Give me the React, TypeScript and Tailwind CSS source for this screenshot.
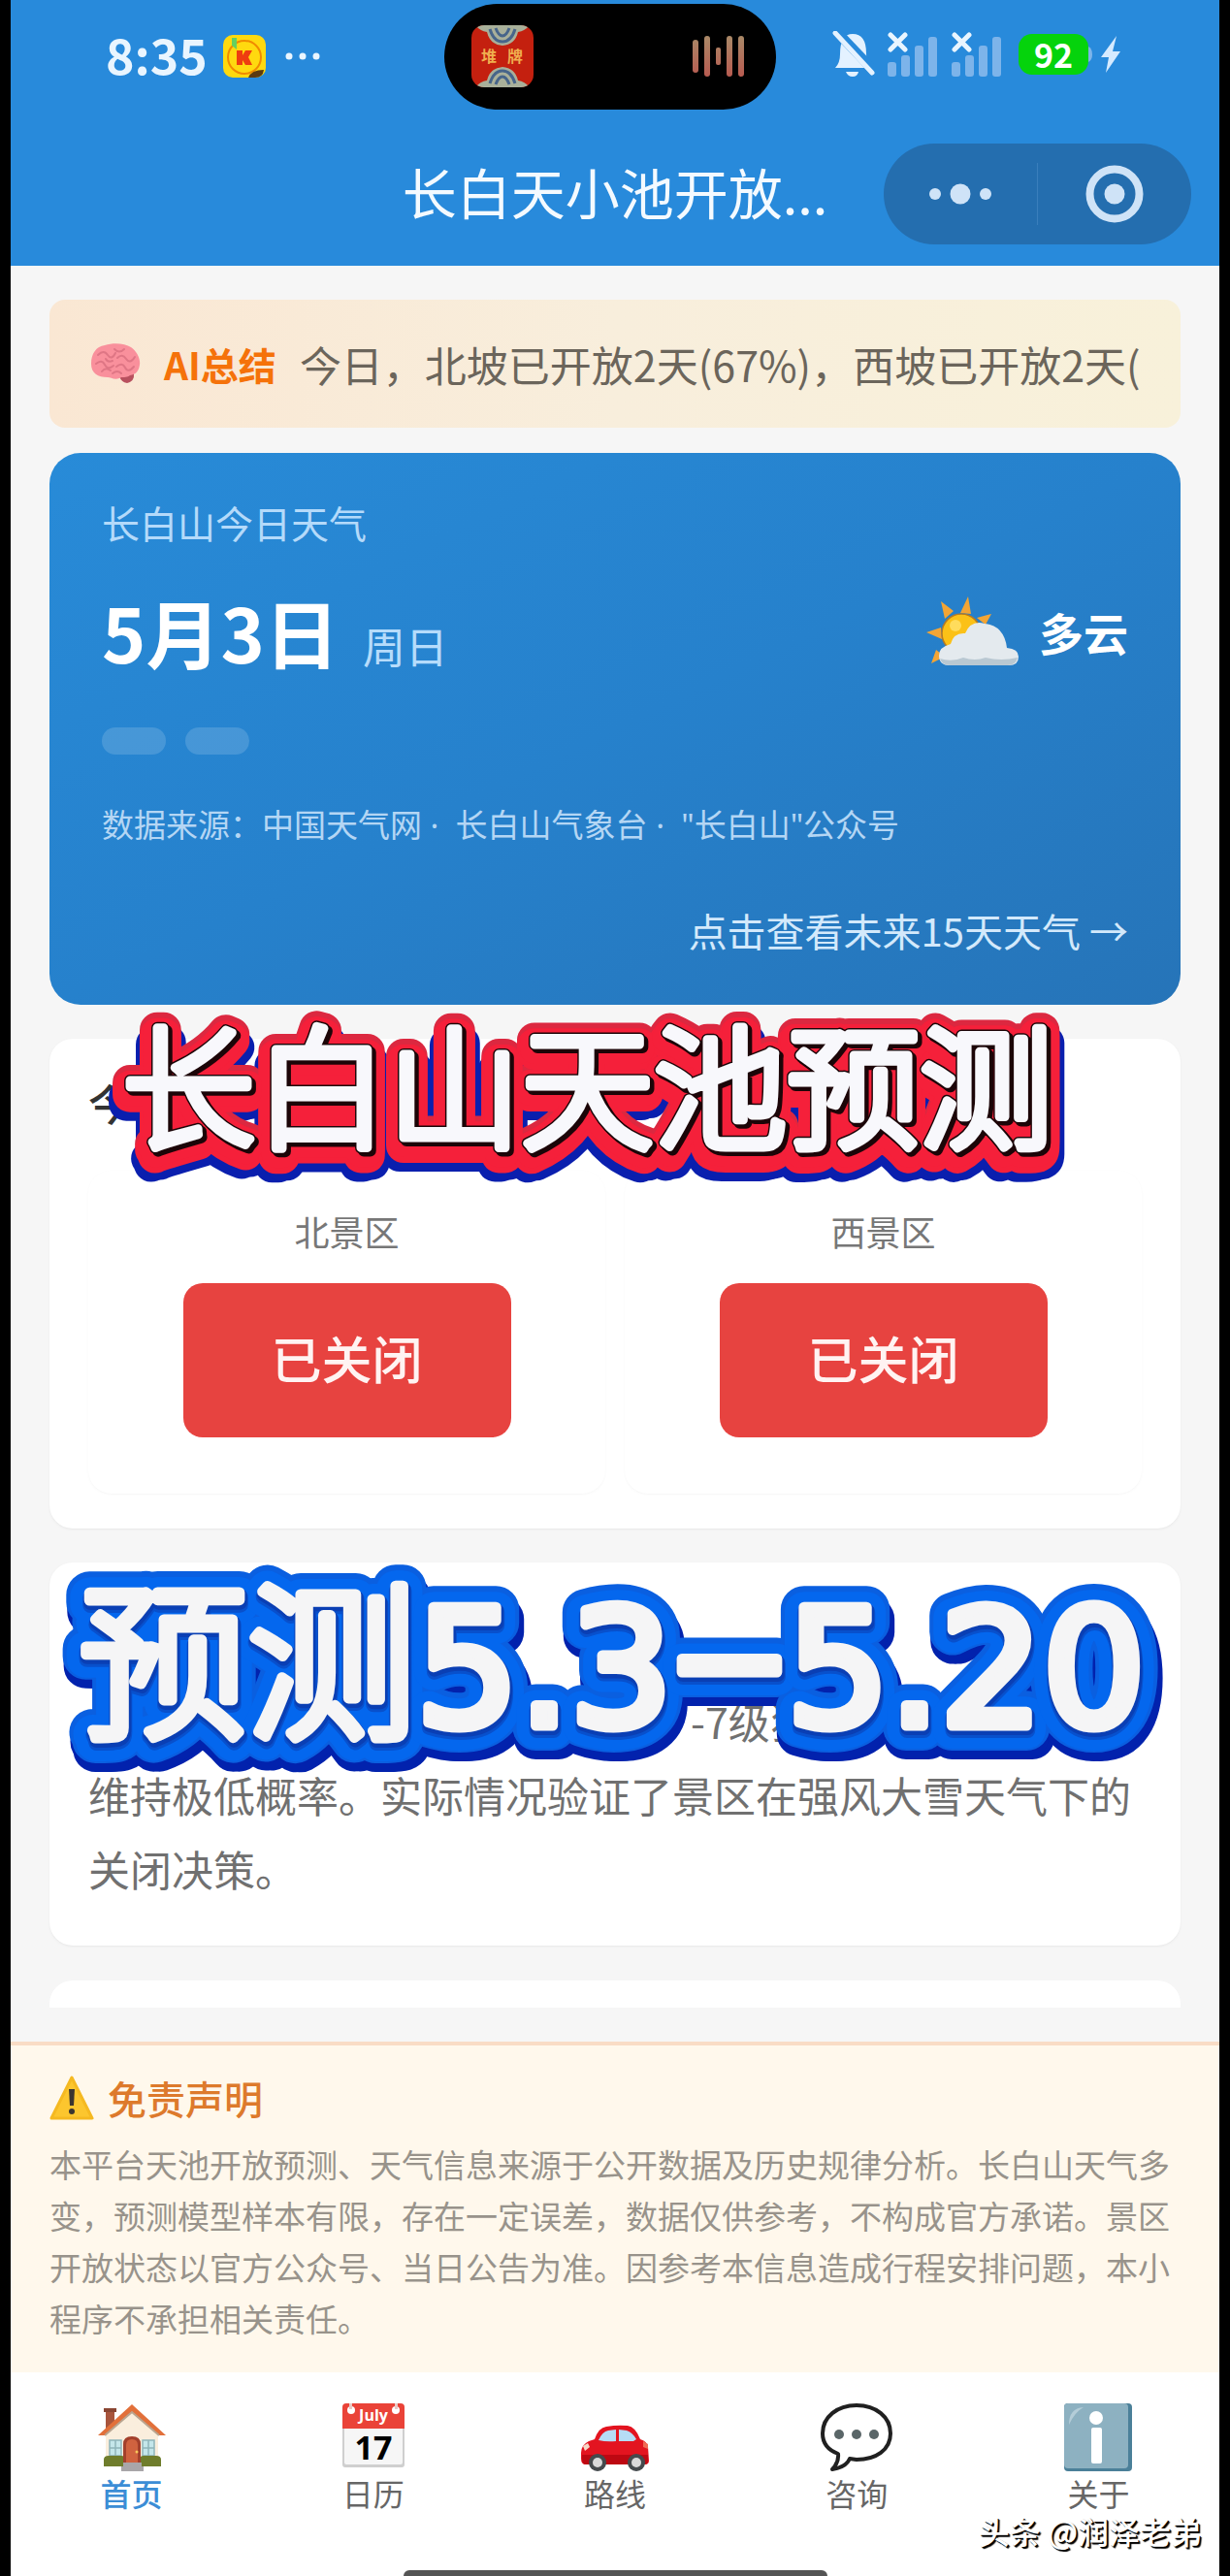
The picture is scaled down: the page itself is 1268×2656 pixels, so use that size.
import type { ReactNode } from "react";

const notice = "今日，北坡已开放2天(67%)，西坡已开放2天(";

const areas = [
  { name: "北景区", status: "已关闭" },
  { name: "西景区", status: "已关闭" },
];

const tabs = [
  { label: "首页", icon: <HouseIcon />, active: true },
  { label: "日历", icon: <CalendarIcon />, active: false },
  { label: "路线", icon: <CarIcon />, active: false },
  { label: "咨询", icon: <BubbleIcon />, active: false },
  { label: "关于", icon: <InfoIcon />, active: false },
];

function HouseIcon() {
  return (
    <svg viewBox="0 0 70 70" className="size-[70px]" aria-hidden="true">
      <path d="M8 7h9v20H8z" fill="#a8553c" />
      <path d="M6 5h13v4H6z" fill="#8a4633" />
      <path d="M8 32 35 6l27 26v32H8z" fill="#faeedd" />
      <path d="M35 1 0 33h7L35 9l28 24h7z" fill="#e2703a" />
      <path d="M7 33 35 9l28 24" fill="none" stroke="#b9a48f" strokeWidth="2" />
      <g fill="#c4e6ea" stroke="#8fb5ba" strokeWidth="1.5">
        <path d="M12 38h12v16H12zM46 38h12v16H46z" />
        <path d="M18 38v16M12 46h12M52 38v16M46 46h12" />
      </g>
      <path d="M6 58q0-4 5-4h13q4 0 4 4v7H6zM43 58q0-4 4-4h13q5 0 5 4v7H43z" fill="#6f7d2c" />
      <path d="M26 62V42q0-8 9-8t9 8v20z" fill="#a3402c" />
      <path d="M29 61V43q0-6 6-6t6 6v18z" fill="#d0623f" />
      <circle cx="40" cy="50" r="1.5" fill="#f7c65a" />
      <path d="M26 61h19v4h2v5H24v-5h2z" fill="#a9a6a9" />
    </svg>
  );
}

function CalendarIcon() {
  return (
    <svg viewBox="0 0 70 70" className="size-[70px]" aria-hidden="true">
      <rect x="3" y="2" width="64" height="64" rx="3" fill="#cfcfcf" />
      <rect x="5" y="4" width="60" height="59" rx="2" fill="#f6f6f6" />
      <path d="M3 4q0-4 4-4h56q4 0 4 4v22H3z" fill="#ea4338" />
      <circle cx="12" cy="7" r="4" fill="#fff" />
      <circle cx="58" cy="7" r="4" fill="#fff" />
      <path d="M10 0h3v6h-3zM57 0h3v6h-3z" fill="#e9c9c5" />
      <text
        x="35"
        y="18"
        textAnchor="middle"
        className="fill-white font-['Open_Sans',sans-serif] text-[16px] font-bold"
      >
        July
      </text>
      <text
        x="35"
        y="58"
        textAnchor="middle"
        className="fill-black font-['Open_Sans',sans-serif] text-[34px] font-bold"
      >
        17
      </text>
    </svg>
  );
}

function CarIcon() {
  return (
    <svg viewBox="0 0 70 70" className="size-[70px]" aria-hidden="true">
      <path
        d="M0 51q0-8 8-12 3-1 6-2 4-12 12-13 11-2 22-1 8 1 13 14 7 2 8 8l1 14q0 4-4 4H5q-5 0-5-6z"
        fill="#e31420"
      />
      <path d="M18 38q4-9 10-10l8-1v12q-10 1-18-1zM39 27l8 1q6 2 10 9l-3 2H39z" fill="#b6dcf5" />
      <path d="M1 53h68v6q0 4-4 4H5q-5 0-4-10z" fill="#bd0812" />
      <path d="M2 44l5-3 2 4-5 4z" fill="#f7d9c8" />
      <path d="M64 39l5 3v5l-5-2z" fill="#f06a55" />
      <circle cx="17" cy="61" r="9" fill="#454a4d" />
      <circle cx="17" cy="61" r="5" fill="#d9d9d9" />
      <circle cx="57" cy="61" r="9" fill="#454a4d" />
      <circle cx="57" cy="61" r="5" fill="#d9d9d9" />
    </svg>
  );
}

function BubbleIcon() {
  return (
    <svg viewBox="0 0 74 70" className="h-[70px] w-[74px]" aria-hidden="true">
      <path
        d="M37 2c20 0 35 12 35 29S57 58 37 58l-7-1q-4 9-18 11 7-7 6-16Q2 46 2 31C2 14 17 2 37 2z"
        fill="#fff"
        stroke="#202020"
        strokeWidth="4"
        strokeLinejoin="round"
      />
      <g fill="#5a6668">
        <circle cx="19" cy="32" r="5" />
        <circle cx="37" cy="32" r="5" />
        <circle cx="55" cy="32" r="5" />
      </g>
    </svg>
  );
}

function InfoIcon() {
  return (
    <svg viewBox="0 0 70 70" className="size-[70px]" aria-hidden="true">
      <rect width="70" height="70" rx="4" fill="#4b8099" />
      <rect width="66" height="67" rx="4" fill="#8db1c1" />
      <path d="M5 22Q5 5 20 4q-9 5-15 18z" fill="#b4cdd8" />
      <circle cx="33" cy="15" r="7" fill="#fff" />
      <rect x="28" y="25" width="11" height="37" rx="2" fill="#fff" />
    </svg>
  );
}

function BrainIcon() {
  return (
    <svg viewBox="0 0 52 42" className="h-[42px] w-[52px] shrink-0" aria-hidden="true">
      <path d="M30 34q8-4 15-3 1 8-7 10-6-1-8-7z" fill="#b8505e" />
      <path
        d="M1 21C1 11 6 3 15 2 24-1 36 0 42 4c6 4 10 12 9 18-1 7-4 10-10 11-4 3-8 1-11 3-5 2-9-1-12-1C8 35 1 31 1 21z"
        fill="#f9909c"
      />
      <path
        d="M8 12q6-6 10 0t8-2M6 21q6-5 9 1t9 1M12 29q4-5 9-1M25 6q5 5 10 0M28 15q5-5 9 1t9-2M27 24q6-5 9 1t9-1M23 31q5-4 9 0M16 16q2 4 7 2"
        fill="none"
        stroke="#df7685"
        strokeWidth="2"
        strokeLinecap="round"
      />
    </svg>
  );
}

function SunCloudIcon() {
  return (
    <svg viewBox="0 0 96 72" className="h-[72px] w-[96px]" aria-hidden="true">
      <g fill="#f3a535">
        <path d="M43 0l3 18-11-1zM15 5l13 10-9 8zM0 37l15-5 1 12zM5 69l5-14 9 7zM67 18l-6 11-9-7z" />
      </g>
      <circle cx="36" cy="38" r="20" fill="#fbc117" stroke="#b77a21" strokeWidth="1.5" />
      <circle cx="30" cy="30" r="6" fill="#ffdc5c" />
      <path
        d="M24 71q-11 0-11-10 0-9 12-12 3-12 15-11 6-14 20-10 20 2 23 25 12 1 12 9 0 9-10 9z"
        fill="#e4eaee"
      />
      <path d="M14 64q12 4 24-1 12 4 23 0 16 4 33 0-2 8-10 8H24q-8 0-10-7z" fill="#b9c8d2" />
    </svg>
  );
}

function WarningIcon() {
  return (
    <svg viewBox="0 0 46 46" className="size-[46px]" aria-hidden="true">
      <path d="M23 2 44 44H2z" fill="#fcc62e" stroke="#f5b921" strokeWidth="3" strokeLinejoin="round" />
      <path d="M20 14h6l-1 17h-4z" fill="#3b3530" />
      <circle cx="23" cy="37" r="3" fill="#3b3530" />
    </svg>
  );
}

function SignalIcon() {
  return (
    <svg viewBox="0 0 54 46" className="h-[46px] w-[54px]" aria-hidden="true">
      <g fill="#7db4ea">
        <rect x="1" y="31" width="9" height="15" rx="3" />
        <rect x="15" y="24" width="9" height="22" rx="3" />
        <rect x="29" y="14" width="9" height="32" rx="3" />
        <rect x="43" y="5" width="9" height="41" rx="3" />
      </g>
      <path d="M4 3l15 15M19 3L4 18" stroke="#e9f5ff" strokeWidth="5" strokeLinecap="round" />
    </svg>
  );
}

function StatusBar() {
  return (
    <div className="grid h-[116px] grid-cols-[1fr_342px_1fr] items-center pr-2.5">
      <div className="flex items-center pl-[98px]">
        <span className="pb-1.5 text-[50px] leading-none font-bold text-[#e9f5ff]">8:35</span>
        <svg viewBox="0 0 44 44" className="ml-4 size-[44px]" aria-hidden="true">
          <rect width="44" height="44" rx="10" fill="#ffd90f" />
          <circle cx="22" cy="23" r="17" fill="none" stroke="#f08a00" strokeWidth="2" />
          <path d="M14 16h6v5l3-5h7l-4 7 4 8h-7l-3-5v5h-6z" fill="#ee3d10" />
          <path d="M9 3h5v12l-5-4z" fill="#66cf5f" />
          <path d="M26 44q3-8 16-8-1 8-9 8z" fill="#5c3a10" />
        </svg>
        <svg viewBox="0 0 36 8" className="ml-5 h-2 w-9" fill="#e9f5ff" aria-hidden="true">
          <circle cx="4" cy="4" r="3.5" />
          <circle cx="18" cy="4" r="3.5" />
          <circle cx="32" cy="4" r="3.5" />
        </svg>
      </div>

      <div className="flex h-[109px] items-center justify-between rounded-full bg-black pr-8 pl-7">
        <svg viewBox="0 0 64 64" className="size-16" aria-hidden="true">
          <clipPath id="tile">
            <rect width="64" height="64" rx="13" />
          </clipPath>
          <g clipPath="url(#tile)">
            <rect width="64" height="64" fill="#c4200f" />
            <g fill="#a9b09a">
              <path d="M4 0h56q-5 6-12 7-3 13-16 14Q19 20 16 7 9 6 4 0z" />
              <path d="M4 64h56q-5-6-12-7-3-13-16-14-13 1-16 14-7 1-12 7z" />
            </g>
            <g fill="none" stroke="#47658a" strokeWidth="3">
              <path d="M19 4q4 13 13 13T45 4M25 3q3 8 7 8t7-8" />
              <path d="M19 60q4-13 13-13t13 13M25 61q3-8 7-8t7 8" />
            </g>
            <text x="10" y="38" className="fill-[#f0b050] text-[16px] font-bold">
              堆
            </text>
            <text x="37" y="38" className="fill-[#f0b050] text-[16px] font-bold">
              牌
            </text>
          </g>
        </svg>
        <svg viewBox="0 0 54 44" className="h-11 w-[54px]" aria-hidden="true">
          <linearGradient id="wave" x1="0" y1="0" x2="0" y2="44" gradientUnits="userSpaceOnUse">
            <stop stopColor="#a98a68" />
            <stop offset="1" stopColor="#b85a50" />
          </linearGradient>
          <g fill="url(#wave)">
            <rect x="0" y="5" width="6" height="34" rx="3" />
            <rect x="12" y="1" width="6" height="42" rx="3" />
            <rect x="24" y="13" width="5" height="18" rx="2" />
            <rect x="35" y="1" width="6" height="42" rx="3" />
            <rect x="47" y="1" width="6" height="42" rx="3" />
          </g>
        </svg>
      </div>

      <div className="flex items-center pb-1 pl-[58px]">
        <svg viewBox="0 0 44 48" className="mr-3 h-12 w-11" aria-hidden="true">
          <path
            d="M3 38q5-5 5-14 0-21 13-21 14 0 14 20 0 10 4 15zM14 42h13q-1 5-6 5t-7-5z"
            fill="#e4f2ff"
          />
          <path d="M4 0 44 42" stroke="#288adb" strokeWidth="10" />
          <path d="M3 2 41 43" stroke="#e4f2ff" strokeWidth="5" strokeLinecap="round" />
        </svg>
        <SignalIcon />
        <span className="ml-3">
          <SignalIcon />
        </span>
        <span className="ml-4 flex h-[42px] w-[72px] items-center justify-center rounded-[14px] bg-[#05d30c] text-[34px] leading-none font-bold text-white">
          92
        </span>
        <svg viewBox="0 0 34 40" className="h-10 w-[34px]" aria-hidden="true">
          <path d="M0 12q4 2 4 8t-4 8z" fill="#7db4ea" />
          <path d="M29 1 13 23h8l-3 16 15-22h-8z" fill="#d5eaff" />
        </svg>
      </div>
    </div>
  );
}

function NavBar() {
  return (
    <div className="grid grid-cols-[1fr_auto_1fr] items-center pt-8 pr-[29px] pb-[22px] pl-[29px]">
      <h1 className="col-start-2 pb-1.5 text-[56px] leading-none text-[#f4faff]">长白天小池开放...</h1>
      <div className="flex h-[104px] w-[317px] items-center justify-self-end rounded-full bg-[#246eaf]">
        <button type="button" aria-label="更多" className="flex h-full flex-1 items-center justify-center">
          <svg viewBox="0 0 64 22" className="h-[22px] w-16" fill="#cfe3f7" aria-hidden="true">
            <circle cx="6" cy="11" r="6" />
            <circle cx="32" cy="11" r="10.5" />
            <circle cx="58" cy="11" r="6" />
          </svg>
        </button>
        <span className="h-16 w-px bg-[#3a7fbd]" />
        <button type="button" aria-label="关闭" className="flex h-full flex-1 items-center justify-center">
          <svg viewBox="0 0 60 60" className="size-[60px]" aria-hidden="true">
            <circle cx="30" cy="30" r="25.5" fill="none" stroke="#cfe3f7" strokeWidth="8" />
            <circle cx="30" cy="30" r="10.5" fill="#cfe3f7" />
          </svg>
        </button>
      </div>
    </div>
  );
}

function WeatherCard() {
  return (
    <section className="flex flex-col rounded-[32px] bg-linear-to-br from-[#288bd8] via-[#2681cc] to-[#2674b8] px-[54px] pt-[50px] pb-[52px]">
      <p className="text-[39px] leading-[42px] text-[#b4dafa]">长白山今日天气</p>
      <div className="mt-[50px] flex h-[84px] items-center justify-between">
        <div className="flex items-baseline gap-6 text-white">
          <span className="text-[77px] leading-[84px] font-bold">5月3日</span>
          <span className="text-[44px] leading-none text-[#b6dcfb]">周日</span>
        </div>
        <div className="flex items-center gap-5">
          <SunCloudIcon />
          <span className="text-[46px] leading-none font-bold text-white">多云</span>
        </div>
      </div>
      <div className="mt-[57px] flex gap-5">
        <span className="h-7 w-[66px] rounded-full bg-white/15" />
        <span className="h-7 w-[66px] rounded-full bg-white/15" />
      </div>
      <p className="mt-[52px] font-['Noto_Sans','Noto_Sans_CJK_SC',sans-serif] text-[33px] leading-[42px] text-[#b4d6f4]">
        数据来源：中国天气网 ·&nbsp; 长白山气象台 ·&nbsp; "长白山"公众号
      </p>
      <a href="#forecast" className="mt-[62px] self-end text-[40px] leading-[50px] text-[#d3e9fb]">
        点击查看未来15天天气 →
      </a>
    </section>
  );
}

function StatusCard() {
  return (
    <section className="rounded-3xl bg-white px-10 py-9 shadow-sm shadow-black/5">
      <h2 className="text-[44px] leading-[60px] font-medium text-[#333]">今日</h2>
      <div className="mt-10 grid grid-cols-2 gap-5">
        {areas.map((area) => (
          <div
            key={area.name}
            className="flex flex-col items-center rounded-3xl bg-white pt-10 pb-[58px] shadow-sm shadow-black/3"
          >
            <p className="text-[36px] leading-[44px] text-[#777]">{area.name}</p>
            <button
              type="button"
              className="mt-8 h-[159px] w-[338px] rounded-[20px] bg-[#e74340] pb-1.5 text-[52px] leading-none font-medium text-[#fff3f2]"
            >
              {area.status}
            </button>
          </div>
        ))}
      </div>
    </section>
  );
}

function Disclaimer() {
  return (
    <section className="border-t-4 border-[#f9dcc5] bg-[#fff8ec] px-10 pt-7 pb-[29px]">
      <h2 className="flex items-center gap-3.5 text-[40px] leading-[52px] font-medium text-[#dd7a2c]">
        <WarningIcon />
        免责声明
      </h2>
      <p className="mt-4 text-[33px] leading-[53px] text-[#98938b]">
        本平台天池开放预测、天气信息来源于公开数据及历史规律分析。长白山天气多变，预测模型样本有限，存在一定误差，数据仅供参考，不构成官方承诺。景区开放状态以官方公众号、当日公告为准。因参考本信息造成行程安排问题，本小程序不承担相关责任。
      </p>
    </section>
  );
}

type Layer = { dx: number; dy: number; width: number; color: string };

const redLayers: Layer[] = [
  { dx: -4, dy: 17, width: 36, color: "#0a1fae" },
  { dx: 5, dy: 15, width: 36, color: "#0a1fae" },
  { dx: 0, dy: 2, width: 36, color: "#dc2840" },
  { dx: 0, dy: 8, width: 36, color: "#f5203a" },
  { dx: 0, dy: 5, width: 30, color: "#f5203a" },
  { dx: 3, dy: 3, width: 12, color: "#1c0508" },
  { dx: 0, dy: 0, width: 12, color: "#1c0508" },
  { dx: 0, dy: 0, width: 9, color: "#f8f8fc" },
];

const blueLayers: Layer[] = [
  { dx: 6, dy: 12, width: 46, color: "#0222ad" },
  { dx: 0, dy: 12, width: 46, color: "#0222ad" },
  { dx: 0, dy: 2, width: 48, color: "#0a5fe0" },
  { dx: 0, dy: 4, width: 40, color: "#0467ee" },
  { dx: 1, dy: 5, width: 16, color: "#0850cc" },
  { dx: 1, dy: 3, width: 14, color: "#0a3fb4" },
  { dx: 0, dy: 0, width: 11, color: "#f5f5f6" },
];

// Sticker lettering laid over the cards, the same text stroked once per layer
function Sticker({
  id,
  viewBox,
  layers,
  children,
}: {
  id: string;
  viewBox: string;
  layers: Layer[];
  children: ReactNode;
}) {
  const face = layers[layers.length - 1];
  return (
    <svg
      viewBox={viewBox}
      strokeLinejoin="round"
      strokeLinecap="round"
      className="pointer-events-none absolute inset-x-0 top-[35px] w-full overflow-visible"
    >
      {layers.slice(0, -1).map((l, i) => (
        <use
          key={i}
          href={`#${id}`}
          x={l.dx}
          y={l.dy}
          fill={l.color}
          stroke={l.color}
          strokeWidth={l.width}
          aria-hidden="true"
        />
      ))}
      <g fill={face.color} stroke={face.color} strokeWidth={face.width}>
        {children}
      </g>
    </svg>
  );
}

function RedSticker() {
  return (
    <Sticker id="sticker-title" viewBox="0 0 1246 200" layers={redLayers}>
      <text id="sticker-title" x="115" y="103" className="text-[137px] font-light">
        长白山天池预测
      </text>
    </Sticker>
  );
}

function BlueSticker() {
  return (
    <Sticker id="sticker-dates" viewBox="0 0 1246 240" layers={blueLayers}>
      <text id="sticker-dates" x="70" y="168" className="text-[174px] font-light">
        预测
        <tspan className="font-['DejaVu_Sans',sans-serif] text-[166px] font-normal" strokeWidth="inherit">
          5.3
        </tspan>
        <tspan className="text-[220px] font-normal">–</tspan>
        <tspan className="font-['DejaVu_Sans',sans-serif] text-[166px] font-normal">5.20</tspan>
      </text>
    </Sticker>
  );
}

function TabBar() {
  return (
    <footer className="relative bg-white">
      <nav className="grid grid-cols-5 pt-8 pb-[58px]">
        {tabs.map((tab) => (
          <a key={tab.label} href={`#${tab.label}`} className="flex flex-col items-center">
            {tab.icon}
            <span
              className={
                tab.active
                  ? "text-[32px] leading-[44px] font-medium text-[#3b8dd6]"
                  : "text-[32px] leading-[44px] text-[#666]"
              }
            >
              {tab.label}
            </span>
          </a>
        ))}
      </nav>
      <div className="mx-auto h-1.5 w-[437px] rounded-t-full bg-[#555]" />
      <p className="absolute right-[18px] bottom-7 text-[32px] leading-[38px] font-medium text-white [text-shadow:2px_2px_1px_#000,1px_1px_0_#000]">
        头条 @润泽老弟
      </p>
    </footer>
  );
}

export default function App() {
  return (
    <div className="bg-black px-[11px] font-['Noto_Sans_CJK_SC','Noto_Sans',sans-serif]">
      <header className="bg-[#288adb]">
        <StatusBar />
        <NavBar />
      </header>

      <main className="bg-[#f6f6f6] px-10 pt-[35px] pb-[35px]">
        <div className="mb-[26px] flex h-[132px] items-center rounded-2xl bg-linear-to-r from-[#fae7d3] via-[#f8eedc] to-[#f8f1da] px-[42px]">
          <BrainIcon />
          <strong className="ml-6 shrink-0 text-[39px] leading-none font-bold text-[#f5720a]">
            AI总结
          </strong>
          <p className="ml-6 text-[43px] leading-[60px] whitespace-nowrap text-[#6b655b]">{notice}</p>
        </div>

        <WeatherCard />

        {/* -mx-10 lets the lettering span the full screen width */}
        <div className="relative -mx-10 px-10 pt-[35px]">
          <StatusCard />
          <RedSticker />
        </div>

        <div className="relative -mx-10 px-10 pt-[35px]">
          <section className="rounded-3xl bg-white px-10 pt-[125px] pb-[42px] shadow-sm shadow-black/5">
            <p className="text-[43px] leading-[76px] text-[#707070]">
              <span className="block pl-[621px]">-7级狂</span>
              维持极低概率。实际情况验证了景区在强风大雪天气下的关闭决策。
            </p>
          </section>
          <BlueSticker />
        </div>

        <div className="mt-9 h-7 rounded-t-3xl bg-white" />
      </main>

      <Disclaimer />
      <TabBar />
    </div>
  );
}
